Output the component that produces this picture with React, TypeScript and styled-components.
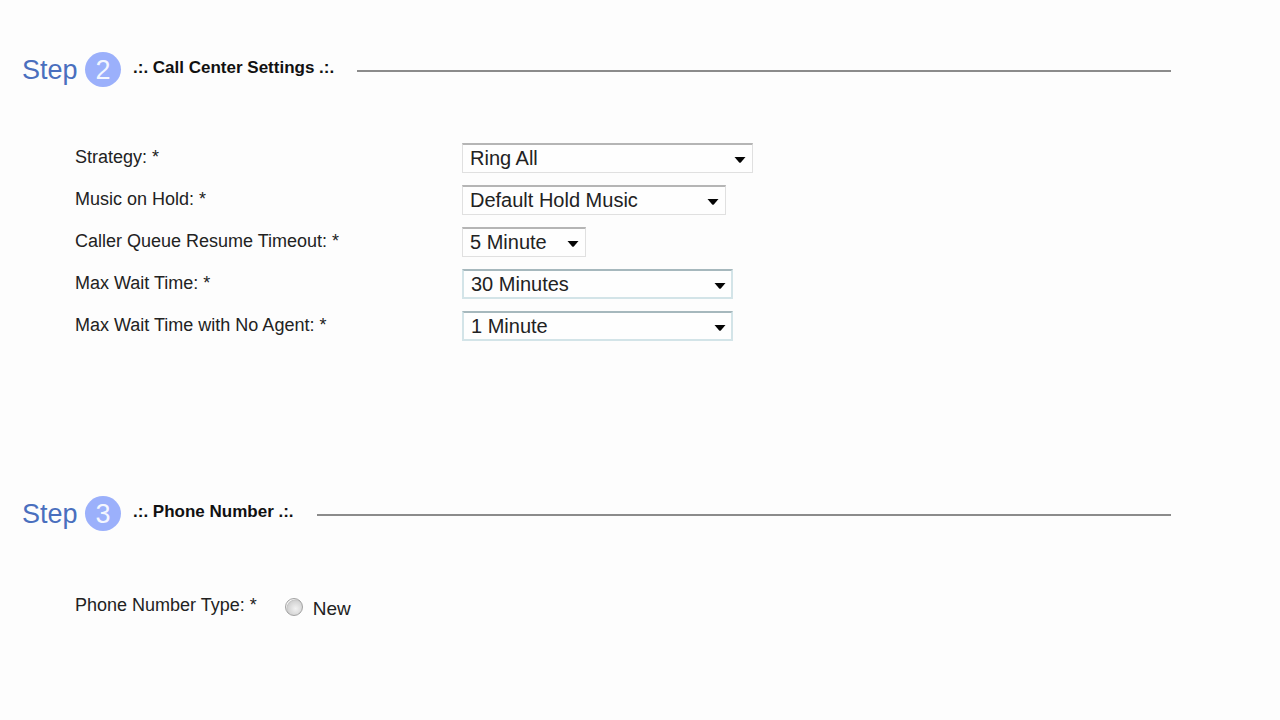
import React, { useId, useState } from "react";
import styled, { createGlobalStyle, css } from "styled-components";

const GlobalStyle = createGlobalStyle`
  *, *::before, *::after { box-sizing: border-box; }
  body {
    margin: 0;
    background: #fdfdfd;
    color: #222;
    font-family: "Liberation Sans", Arial, Helvetica, sans-serif;
    font-size: 18px;
  }
`;

const Page = styled.main`
  display: flex;
  flex-direction: column;
  gap: 151px;
  padding: 48px 109px 48px 22px;
`;

const Section = styled.section`
  display: flex;
  flex-direction: column;
`;

const Header = styled.header`
  display: flex;
  align-items: center;
  height: 43px;
`;

const StepWord = styled.span`
  width: 63px;
  color: #4a6fbe;
  font-size: 27px;
  line-height: 44px;
`;

const StepNumber = styled.span`
  display: flex;
  align-items: center;
  justify-content: center;
  width: 36px;
  height: 35px;
  border-radius: 50%;
  background: #9bb0fb;
  color: #f4f7ff;
  font-size: 27px;
  line-height: 36px;
`;

const Title = styled.h2`
  margin: 0 23px 0 12px;
  padding-bottom: 3px;
  color: #111;
  font-size: 17px;
  line-height: 24px;
  font-weight: bold;
  white-space: nowrap;
`;

const Rule = styled.hr`
  flex: 1;
  height: 2px;
  margin: 2px 0 0;
  border: 0;
  background: #8b8b8b;
`;

const Fields = styled.div`
  display: flex;
  flex-direction: column;
  gap: 12px;
  padding: 52px 0 0 53px;
`;

const Field = styled.div`
  display: grid;
  grid-template-columns: 387px 1fr;
  height: 30px;
`;

const FieldLabel = styled.label`
  line-height: 28px;
`;

const SelectBox = styled.div<{ $width: number }>`
  position: relative;
  width: ${(p) => p.$width}px;
  height: 30px;
`;

const Select = styled.select<{ $tinted?: boolean }>`
  appearance: none;
  width: 100%;
  height: 30px;
  padding: 0 24px 2px 7px;
  border: 1px solid #e0e0e0;
  border-top: 2px solid #b5b5b5;
  border-radius: 0;
  background: #fefefe;
  color: #222;
  font-family: inherit;
  font-size: 20px;
  ${(p) =>
    p.$tinted &&
    css`
      padding-top: 2px;
      border: 2px solid #d3e4e8;
      border-top-color: #a6b8bd;
    `}
`;

const Arrow = styled.svg`
  position: absolute;
  top: 14px;
  right: 7px;
  width: 12px;
  height: 6px;
  pointer-events: none;
`;

const PhoneRow = styled.fieldset`
  display: flex;
  gap: 28px;
  margin: 0;
  padding: 56px 0 0 53px;
  border: 0;
`;

const RowName = styled.span`
  line-height: 28px;
`;

const RadioLabel = styled.label`
  display: flex;
  gap: 10px;
  padding-top: 4px;
  font-size: 19px;
  line-height: 28px;
`;

const Radio = styled.input`
  appearance: none;
  width: 18px;
  height: 18px;
  margin: 3px 0 0;
  border: 1px solid #a2a2a2;
  border-radius: 50%;
  background: radial-gradient(circle at 60% 60%, #f2f2f2 0, #d4d4d4 55%, #c6c6c6 64%, #f4f4f4 70%);

  &:checked {
    background: radial-gradient(circle, #345 0, #345 35%, #e4e4e4 42%);
  }
`;

const settings = [
  { label: "Strategy: *", value: "Ring All", width: 291 },
  { label: "Music on Hold: *", value: "Default Hold Music", width: 264 },
  { label: "Caller Queue Resume Timeout: *", value: "5 Minute", width: 124 },
  { label: "Max Wait Time: *", value: "30 Minutes", width: 271, tinted: true },
  { label: "Max Wait Time with No Agent: *", value: "1 Minute", width: 271, tinted: true },
];

function StepHeader({ step, title }: { step: number; title: string }) {
  return (
    <Header>
      <StepWord>Step</StepWord>
      <StepNumber>{step}</StepNumber>
      <Title>.:. {title} .:.</Title>
      <Rule />
    </Header>
  );
}

function SelectField({ label, value, width, tinted }: (typeof settings)[number]) {
  const id = useId();
  return (
    <Field>
      <FieldLabel htmlFor={id}>{label}</FieldLabel>
      <SelectBox $width={width}>
        <Select id={id} $tinted={tinted}>
          <option>{value}</option>
        </Select>
        <Arrow viewBox="0 0 12 6" aria-hidden="true">
          <path d="M0.5 0H11.5L6.8 5.4Q6 6 5.2 5.4Z" fill="#050505" />
        </Arrow>
      </SelectBox>
    </Field>
  );
}

export default function App() {
  const [type, setType] = useState("");
  return (
    <>
      <GlobalStyle />
      <Page>
        <Section>
          <StepHeader step={2} title="Call Center Settings" />
          <Fields>
            {settings.map((s) => (
              <SelectField key={s.label} {...s} />
            ))}
          </Fields>
        </Section>
        <Section>
          <StepHeader step={3} title="Phone Number" />
          <PhoneRow aria-labelledby="phone-type">
            <RowName id="phone-type">Phone Number Type: *</RowName>
            <RadioLabel>
              <Radio
                type="radio"
                name="phoneType"
                value="new"
                checked={type === "new"}
                onChange={() => setType("new")}
              />
              New
            </RadioLabel>
          </PhoneRow>
        </Section>
      </Page>
    </>
  );
}
